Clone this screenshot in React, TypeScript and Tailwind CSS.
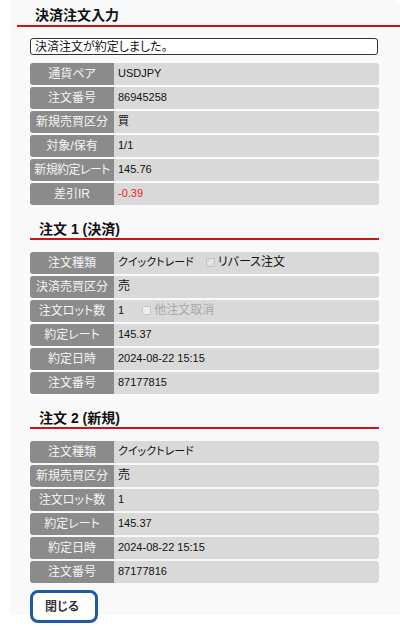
import React from "react";

type RowProps = {
  label: string;
  children: React.ReactNode;
  tight?: boolean;
};

// 項目ラベル＋値の1行
function Row({ label, children, tight }: RowProps) {
  return (
    <div className="flex h-[22px]">
      <div
        className={`w-[84px] shrink-0 bg-[#8b8b8b] rounded-l-[3px] flex items-center justify-center text-[12px] text-[#f4f4f4] pb-[1px] whitespace-nowrap ${
          tight ? "tracking-[-0.6px]" : ""
        }`}
      >
        {label}
      </div>
      <div className="flex-1 bg-[#d9d9d9] rounded-r-[3px] flex items-center pl-[4px] pb-[2px] text-[11px] text-[#111] whitespace-nowrap">
        {children}
      </div>
    </div>
  );
}

function Check({ checked }: { checked?: boolean }) {
  return (
    <span
      className={`inline-flex w-[9px] h-[9px] items-center justify-center border rounded-[1px] ${
        checked ? "border-[#c2c2c2] bg-[#dcdcdc]" : "border-[#c6c6c6] bg-[#ececec]"
      }`}
    >
      {checked && (
        <svg viewBox="0 0 10 10" className="w-[8px] h-[8px]">
          <path d="M2 5.2 L4.2 7.4 L8.2 2.6" fill="none" stroke="#f4f4f4" strokeWidth="1.5" />
        </svg>
      )}
    </span>
  );
}

function SectionTitle({ children }: { children: React.ReactNode }) {
  return (
    <div className="mt-[14px]">
      <div className="pl-[9px] h-[18px] flex items-end text-[14px] font-bold text-[#111] leading-[16px]">
        {children}
      </div>
      <div className="h-[2px] bg-[#cc1616] mt-[1px]" />
    </div>
  );
}

export default function App() {
  const summary = [
    { label: "通貨ペア", value: "USDJPY" },
    { label: "注文番号", value: "86945258" },
    { label: "新規売買区分", value: "買" },
    { label: "対象/保有", value: "1/1" },
    { label: "新規約定レート", value: "145.76", tight: true },
  ];

  const order2 = [
    { label: "注文種類", value: "クイックトレード" },
    { label: "新規売買区分", value: "売" },
    { label: "注文ロット数", value: "1" },
    { label: "約定レート", value: "145.37" },
    { label: "約定日時", value: "2024-08-22 15:15" },
    { label: "注文番号", value: "87177816" },
  ];

  return (
    <div className="w-[400px] h-[630px] bg-white font-['Liberation_Sans','Noto_Sans_CJK_JP',sans-serif] [font-feature-settings:'palt']">
      <div className="ml-[10px] w-[390px] h-[615px] bg-[#f9f9f9] rounded-tr-[8px]">
        {/* タイトル */}
        <div className="pl-[25px] h-[25px] flex items-end pb-[2px] text-[14px] font-bold text-[#111] leading-[16px]">
          決済注文入力
        </div>
        <div className="ml-[7px] h-[2px] bg-[#cc1616]" />

        <div className="pl-[20px] w-[369px]">
          {/* メッセージ */}
          <div className="mt-[11px] h-[17px] border border-[#333] rounded-[3px] bg-white flex items-center pl-[4px] text-[12px] text-[#111] mr-[1px]">
            決済注文が約定しました。
          </div>

          {/* 決済注文サマリー */}
          <div className="mt-[8px] flex flex-col gap-[2px]">
            {summary.map((r) => (
              <Row key={r.label} label={r.label} tight={r.tight}>
                {r.value}
              </Row>
            ))}
            <Row label="差引IR">
              <span className="text-[#e8262c]">-0.39</span>
            </Row>
          </div>

          {/* 注文1 */}
          <SectionTitle>注文 1 (決済)</SectionTitle>
          <div className="mt-[12px] flex flex-col gap-[2px]">
            <Row label="注文種類">
              <span className="text-[11px]">クイックトレード</span>
              <span className="ml-[12px] flex items-center gap-[3px]">
                <Check checked />
                <span className="text-[12px]">リバース注文</span>
              </span>
            </Row>
            <Row label="決済売買区分">
              <span className="text-[12px]">売</span>
            </Row>
            <Row label="注文ロット数">
              <span>1</span>
              <span className="ml-[18px] flex items-center gap-[3px]">
                <Check />
                <span className="text-[12px] text-[#a8a8a8]">他注文取消</span>
              </span>
            </Row>
            <Row label="約定レート">145.37</Row>
            <Row label="約定日時">2024-08-22 15:15</Row>
            <Row label="注文番号">87177815</Row>
          </div>

          {/* 注文2 */}
          <SectionTitle>注文 2 (新規)</SectionTitle>
          <div className="mt-[12px] flex flex-col gap-[2px]">
            {order2.map((r) => (
              <Row key={r.label} label={r.label}>
                <span className={/[0-9]/.test(r.value) ? "" : r.value.length > 2 ? "text-[11px]" : "text-[12px]"}>
                  {r.value}
                </span>
              </Row>
            ))}
          </div>

          {/* 閉じる */}
          <button className="mt-[7px] w-[68px] h-[33px] border-[3px] border-[#1b5ba8] rounded-[8px] bg-white text-[12px] font-bold text-[#333] flex items-center pl-[12px]">
            閉じる
          </button>
        </div>
      </div>
    </div>
  );
}
